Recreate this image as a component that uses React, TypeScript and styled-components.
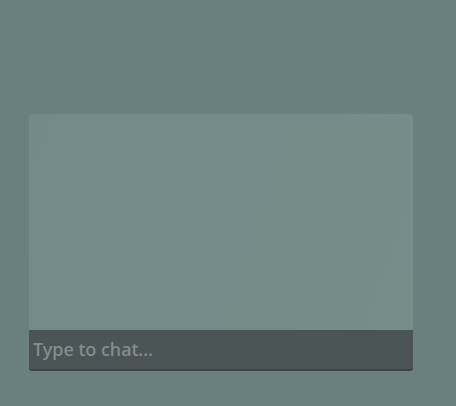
import styled, { createGlobalStyle } from "styled-components";

const GlobalStyle = createGlobalStyle`
  html, body {
    margin: 0;
    padding: 0;
    background: #6a8080;
  }
  #root {
    min-height: 100vh;
  }
`;

const Page = styled.div`
  height: 406px;
  box-sizing: border-box;
  padding: 114px 43px 0 29px;
  background: #6a8080;
`;

const ChatBox = styled.div`
  width: 384px;
  display: flex;
  flex-direction: column;
`;

const Messages = styled.div`
  height: 216px;
  border-radius: 4px 4px 0 0;
  background: linear-gradient(110deg, #738a8a 0%, #758b89 45%, #778d88 100%);
`;

const ChatInput = styled.input`
  height: 41px;
  box-sizing: border-box;
  border: none;
  outline: none;
  border-bottom: 2px solid #3d4546;
  border-radius: 0 0 3px 3px;
  background: #4b5556;
  color: #d0d8d8;
  padding: 0 4px 2px 4px;
  font-family: "Noto Sans", "Open Sans", sans-serif;
  font-size: 18px;
  font-weight: 500;
  &::placeholder {
    color: #848f8f;
  }
`;

export default function App() {
  return (
    <>
      <GlobalStyle />
      <Page>
        <ChatBox>
          <Messages />
          <ChatInput type="text" placeholder="Type to chat..." />
        </ChatBox>
      </Page>
    </>
  );
}
